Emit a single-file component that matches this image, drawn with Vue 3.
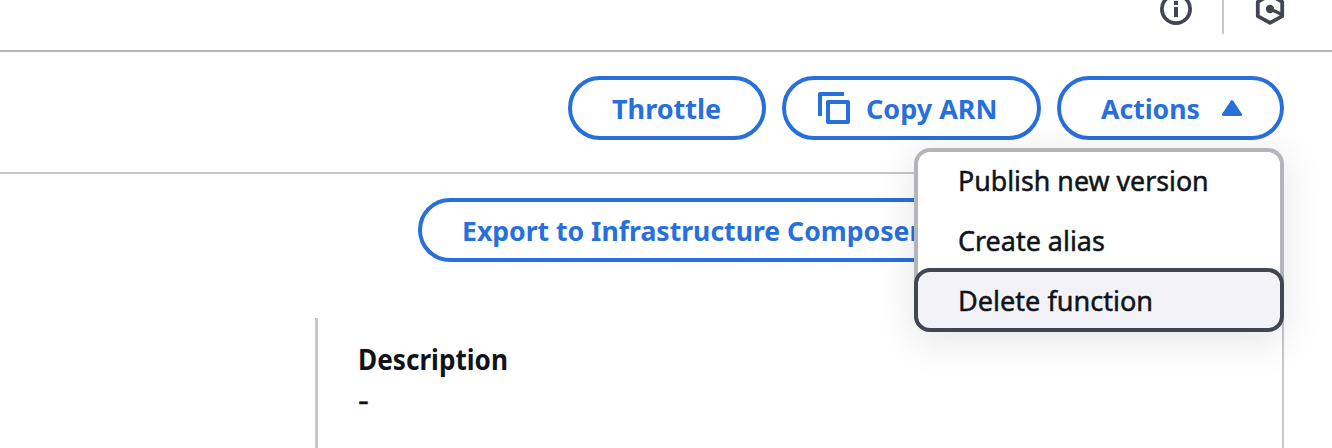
<script setup>
const items = [
  { label: 'Publish new version', name: 'publish' },
  { label: 'Create alias', name: 'alias' },
  { label: 'Delete function', name: 'delete', active: true },
]
</script>

<template>
  <div class="page">
    <header class="topbar">
      <svg class="info" width="32" height="25" viewBox="0 0 32 25">
        <circle cx="16" cy="9" r="14.1" fill="none" stroke="#424650" stroke-width="3.8" />
        <path d="M14 1h4v4h-4zM14 7h4v10h-4z" fill="#424650" />
      </svg>
      <span class="divider"></span>
      <svg class="hex" width="30" height="25" viewBox="0 0 30 25">
        <path d="M15-5.2L27.2 1.8V16.2L15 22.8L2.8 16.2V1.8Z" fill="none" stroke="#424650" stroke-width="3.8" stroke-linejoin="round" />
        <path d="M15 9L27 14.5" stroke="#424650" stroke-width="3.4" />
        <circle cx="15" cy="9" r="4.2" fill="#424650" />
      </svg>
    </header>

    <section class="actions">
      <button class="btn throttle"><span class="t">Throttle</span></button>
      <button class="btn copy">
        <svg width="32" height="32" viewBox="0 0 32 32" fill="none" stroke="#276fdb" stroke-width="4" stroke-linejoin="round">
          <path d="M26 2H2V24" />
          <path d="M10 10H30V30H10Z" />
        </svg>
        <span class="t">Copy ARN</span>
      </button>
      <div class="menu-anchor">
        <button class="btn toggle">
          <span class="t">Actions</span>
          <svg width="20" height="16" viewBox="0 0 20 16">
            <path d="M10 1.6L18.6 14.6H1.4Z" fill="#276fdb" stroke="#276fdb" stroke-width="2.8" stroke-linejoin="round" />
          </svg>
        </button>
        <ul class="menu">
          <li v-for="i in items" :key="i.name" :class="[i.name, { active: i.active }]">
            <span class="t">{{ i.label }}</span>
          </li>
        </ul>
      </div>
    </section>

    <main class="overview">
      <div class="tools">
        <button class="btn export"><span class="t">Export to Infrastructure Composer</span></button>
      </div>
      <div class="details">
        <div class="label"><span class="t">Description</span></div>
        <div class="value"><span class="t">-</span></div>
      </div>
    </main>
  </div>
</template>

<style>
body { background: #fff; overflow: hidden; }
</style>

<style scoped>
* { box-sizing: border-box; }
.page {
  width: 1332px; height: 448px; overflow: hidden; background: #fff; color: #0f141a;
  font: 400 28px/40px "Noto Sans", "Open Sans", sans-serif;
}
.topbar {
  height: 52px; border-bottom: 2px solid #b4b4bb; padding-right: 47px;
  display: flex; justify-content: flex-end; align-items: flex-start;
}
.info { margin-right: 30px; }
.divider { width: 2px; height: 34px; background: #c6c6cd; margin-right: 31px; }
.t { display: inline-block; white-space: nowrap; transform-origin: 0 50%; }
.actions {
  height: 122px; width: 1284px; padding-top: 24px; border-bottom: 2px solid #c6c6cd;
  display: flex; justify-content: flex-end; gap: 16px;
}
.btn {
  height: 64px; border: 4px solid #276fdb; border-radius: 32px; background: transparent;
  color: #276fdb; font: 700 27px/40px "Noto Sans", "Open Sans", sans-serif;
  padding: 0 0 0 40px; display: flex; align-items: center; text-align: left;
}
.btn .t { padding-top: 2px; }
.throttle { width: 198px; }
.copy { width: 259px; padding-left: 32px; gap: 16px; }
.toggle { width: 227px; }
.toggle .t { width: 121px; transform: scaleX(0.985); }
.menu-anchor { position: relative; }
.menu {
  position: absolute; z-index: 5; top: 72px; right: 0; width: 370px; height: 184px;
  margin: 0; padding: 0; list-style: none; background: #fff;
  border: 4px solid #b4b4bb; border-radius: 16px;
  box-shadow: 0 8px 40px 2px rgba(0, 7, 22, 0.1);
}
.menu li { height: 60px; padding: 10px 0 0 40px; -webkit-text-stroke: 0.5px #0f141a; }
.menu li.publish { height: 58px; padding-top: 8px; }
.menu li.active {
  height: 64px; margin: -2px -4px 0; padding: 8px 0 0 40px; background: #f3f3f7;
  border: 4px solid #424650; border-radius: 16px;
}
.publish .t { transform: scaleX(0.956); }
.alias .t { transform: scaleX(0.962); }
.delete .t { transform: scaleX(0.967); }
.overview { width: 1284px; height: 274px; border-right: 2px solid #c6c6cd; }
.tools { height: 144px; padding: 24px 0 0 418px; }
.export { width: 560px; }
.export .t { transform: scaleX(0.985); }
.details { margin-left: 315px; height: 130px; border-left: 3px solid #c6c6cd; padding: 21px 0 0 40px; }
.label { font-weight: 700; height: 40px; }
.label .t { transform: scaleX(0.934); }
.value { height: 40px; }
.value .t { transform: scaleX(1.2); -webkit-text-stroke: 0.5px #0f141a; }
</style>
